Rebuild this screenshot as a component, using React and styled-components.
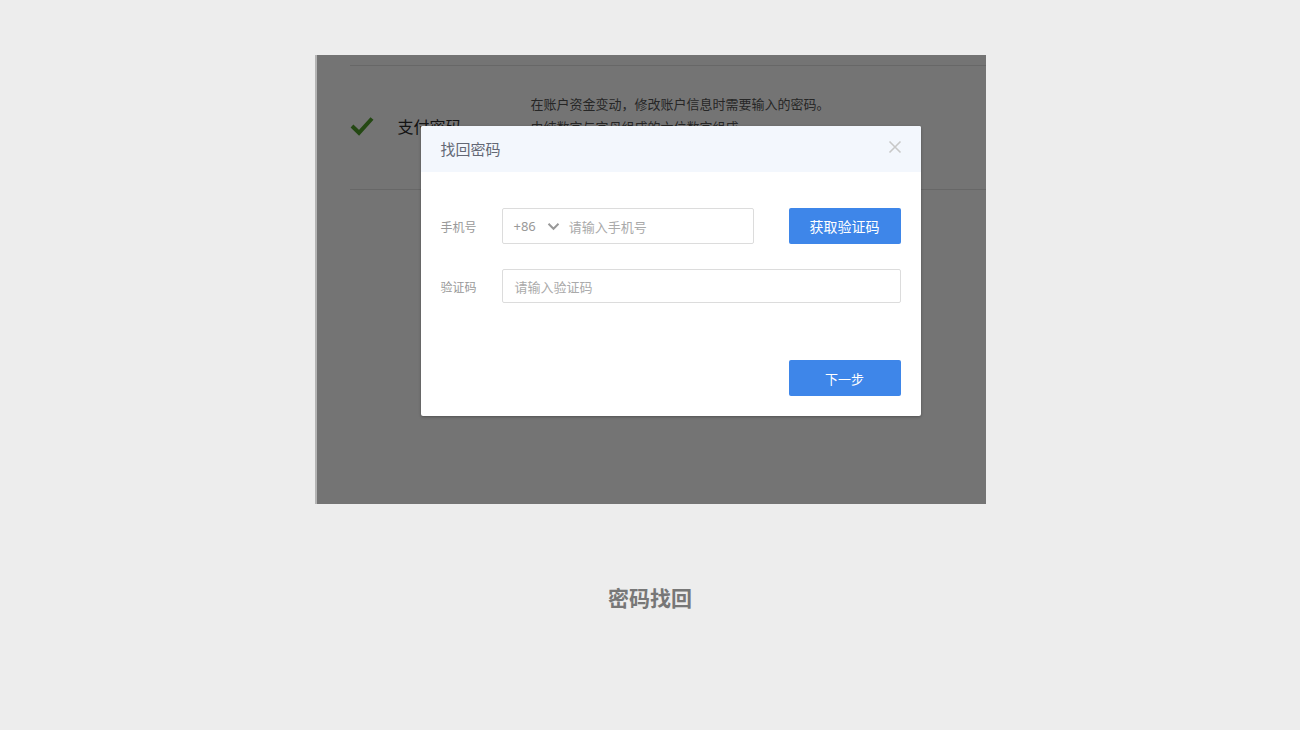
import React from "react";
import styled, { createGlobalStyle } from "styled-components";

const Global = createGlobalStyle`
  html, body { margin: 0; padding: 0; background: #ededed; }
  body { font-family: "Noto Sans CJK SC", "Noto Sans", sans-serif; }
  * { box-sizing: border-box; }
`;

const Page = styled.div`
  width: 1300px;
  height: 730px;
  display: flex;
  flex-direction: column;
  align-items: center;
  padding-top: 55px;
`;

const Frame = styled.div`
  position: relative;
  width: 671px;
  height: 449px;
  background: #fff;
  border-left: 2px solid #b4b4b4;
  overflow: hidden;
`;

const Panel = styled.div`
  padding: 10px 0 0 33px;
`;

const Divider = styled.div`
  height: 1px;
  background: #e2e2e2;
`;

const SettingRow = styled.div`
  display: flex;
  align-items: center;
  height: 123px;
`;

const CheckWrap = styled.div`
  width: 48px;
  display: flex;
  align-items: center;
  margin-top: -3px;
`;

const SettingName = styled.div`
  width: 133px;
  font-size: 16px;
  color: #2c2c2c;
  margin-top: -4px;
`;

const SettingDesc = styled.div`
  font-size: 13px;
  line-height: 23px;
  color: #555;
  margin-top: -26px;
`;

const Overlay = styled.div`
  position: absolute;
  inset: 0;
  background: rgba(0, 0, 0, 0.545);
`;

const Modal = styled.div`
  position: absolute;
  left: 104px;
  top: 71px;
  width: 500px;
  height: 290px;
  background: #fff;
  border-radius: 2px;
  box-shadow: 0 1px 3px rgba(0, 0, 0, 0.3);
  display: flex;
  flex-direction: column;
  overflow: hidden;
`;

const ModalHeader = styled.div`
  height: 46px;
  background: #f3f7fd;
  display: flex;
  align-items: center;
  justify-content: space-between;
  padding: 0 19px 0 20px;
`;

const ModalTitle = styled.div`
  font-size: 15px;
  color: #636875;
  margin-top: -2px;
`;

const CloseBtn = styled.button`
  border: none;
  background: none;
  padding: 0;
  width: 14px;
  height: 14px;
  display: flex;
  cursor: pointer;
  margin-top: -4px;
`;

const ModalBody = styled.div`
  flex: 1;
  padding: 36px 20px 20px 20px;
  display: flex;
  flex-direction: column;
`;

const FormRow = styled.div`
  display: flex;
  align-items: center;
  margin-bottom: ${(p) => p.$mb || 0}px;
`;

const Label = styled.div`
  width: 61px;
  font-size: 12px;
  color: #999;
`;

const InputBox = styled.div`
  width: ${(p) => p.$w}px;
  height: ${(p) => p.$h}px;
  border: 1px solid #dcdcdc;
  border-radius: 2px;
  display: flex;
  align-items: center;
  padding-left: ${(p) => p.$pl || 11}px;
  font-size: 13px;
  color: #aaa;
`;

const Prefix = styled.span`
  color: #999;
  font-size: 13px;
  font-family: "Noto Sans", sans-serif;
`;

const Chevron = styled.span`
  display: flex;
  margin: 0 9px 0 11px;
`;

const Placeholder = styled.span`
  color: #aaa;
  font-size: 13px;
`;

const PrimaryButton = styled.button`
  width: 112px;
  height: 36px;
  background: #3e86e9;
  color: #fff;
  border: none;
  border-radius: 2px;
  font-family: inherit;
  font-size: ${(p) => p.$fs || 14}px;
  margin-left: ${(p) => p.$ml || 0}px;
  cursor: pointer;
  padding: 0;
`;

const Footer = styled.div`
  margin-top: auto;
  display: flex;
  justify-content: flex-end;
`;

const Caption = styled.div`
  margin-top: 78px;
  font-size: 21px;
  font-weight: 700;
  color: #777;
`;

export default function App() {
  return (
    <>
      <Global />
      <Page>
        <Frame>
          <Panel>
            <Divider />
            <SettingRow>
              <CheckWrap>
                <svg width="24" height="20" viewBox="0 0 24 20">
                  <path d="M2 10 L9 16.8 L22 2.5" fill="none" stroke="#4f9e2b" strokeWidth="4" />
                </svg>
              </CheckWrap>
              <SettingName>支付密码</SettingName>
              <SettingDesc>
                在账户资金变动，修改账户信息时需要输入的密码。
                <br />
                由纯数字与字母组成的六位数字组成
              </SettingDesc>
            </SettingRow>
            <Divider />
          </Panel>
          <Overlay>
            <Modal>
              <ModalHeader>
                <ModalTitle>找回密码</ModalTitle>
                <CloseBtn aria-label="关闭">
                  <svg width="14" height="14" viewBox="0 0 14 14">
                    <path d="M1.5 1.5 L12.5 12.5 M12.5 1.5 L1.5 12.5" stroke="#c8c8c8" strokeWidth="1.6" />
                  </svg>
                </CloseBtn>
              </ModalHeader>
              <ModalBody>
                <FormRow $mb={25}>
                  <Label>手机号</Label>
                  <InputBox $w={252} $h={36}>
                    <Prefix>+86</Prefix>
                    <Chevron>
                      <svg width="13" height="9" viewBox="0 0 13 9">
                        <path d="M1.5 1.8 L6.5 6.8 L11.5 1.8" fill="none" stroke="#999" strokeWidth="2" />
                      </svg>
                    </Chevron>
                    <Placeholder>请输入手机号</Placeholder>
                  </InputBox>
                  <PrimaryButton $ml={35}>获取验证码</PrimaryButton>
                </FormRow>
                <FormRow>
                  <Label>验证码</Label>
                  <InputBox $w={399} $h={34} $pl={12}>
                    <Placeholder>请输入验证码</Placeholder>
                  </InputBox>
                </FormRow>
                <Footer>
                  <PrimaryButton $fs={13}>下一步</PrimaryButton>
                </Footer>
              </ModalBody>
            </Modal>
          </Overlay>
        </Frame>
        <Caption>密码找回</Caption>
      </Page>
    </>
  );
}
